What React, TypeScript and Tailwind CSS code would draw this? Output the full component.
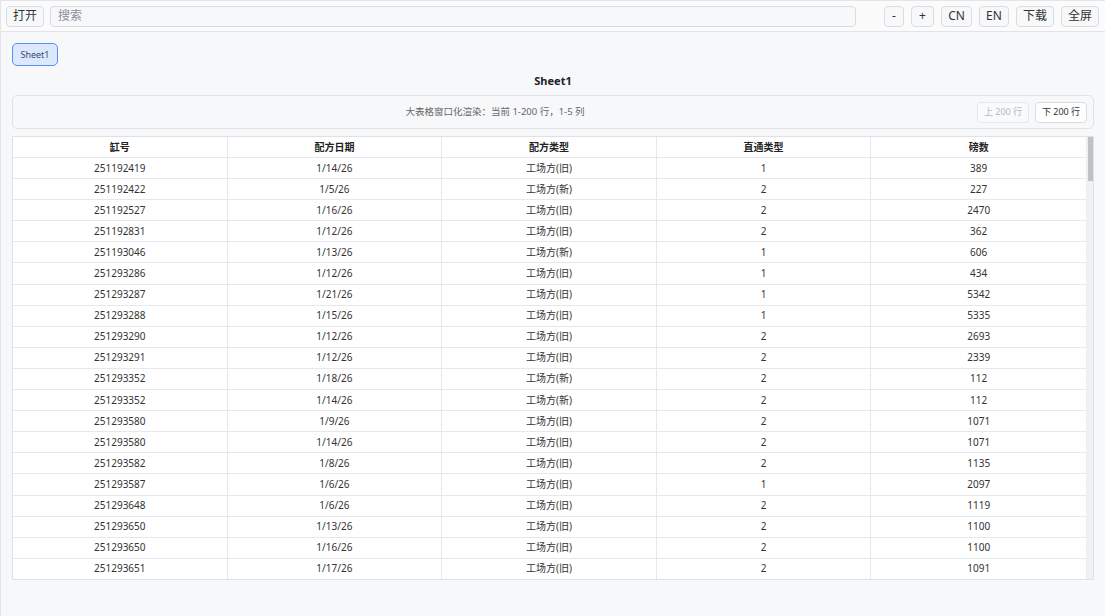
import React from 'react';

const rows: [string, string, string, string, string][] = [
  ['251192419', '1/14/26', '工场方(旧)', '1', '389'],
  ['251192422', '1/5/26', '工场方(新)', '2', '227'],
  ['251192527', '1/16/26', '工场方(旧)', '2', '2470'],
  ['251192831', '1/12/26', '工场方(旧)', '2', '362'],
  ['251193046', '1/13/26', '工场方(新)', '1', '606'],
  ['251293286', '1/12/26', '工场方(旧)', '1', '434'],
  ['251293287', '1/21/26', '工场方(旧)', '1', '5342'],
  ['251293288', '1/15/26', '工场方(旧)', '1', '5335'],
  ['251293290', '1/12/26', '工场方(旧)', '2', '2693'],
  ['251293291', '1/12/26', '工场方(旧)', '2', '2339'],
  ['251293352', '1/18/26', '工场方(新)', '2', '112'],
  ['251293352', '1/14/26', '工场方(新)', '2', '112'],
  ['251293580', '1/9/26', '工场方(旧)', '2', '1071'],
  ['251293580', '1/14/26', '工场方(旧)', '2', '1071'],
  ['251293582', '1/8/26', '工场方(旧)', '2', '1135'],
  ['251293587', '1/6/26', '工场方(旧)', '1', '2097'],
  ['251293648', '1/6/26', '工场方(旧)', '2', '1119'],
  ['251293650', '1/13/26', '工场方(旧)', '2', '1100'],
  ['251293650', '1/16/26', '工场方(旧)', '2', '1100'],
  ['251293651', '1/17/26', '工场方(旧)', '2', '1091'],
];

const headers = ['缸号', '配方日期', '配方类型', '直通类型', '磅数'];

const ToolButton = ({ children, className = '' }: { children: React.ReactNode; className?: string }) => (
  <button className={`h-[21px] rounded-[4px] border border-[#d9dce1] bg-[#f7f8fa] text-[12px] leading-none text-[#333] ${className}`}>
    {children}
  </button>
);

export default function App() {
  return (
    <div
      className="flex h-[616px] w-[1105px] flex-col overflow-hidden border-l border-t border-[#e3e5e8] bg-[#f7f8fa]"
      style={{ fontFamily: '"Noto Sans", "Noto Sans CJK SC", sans-serif' }}
    >
      <div className="flex h-[31px] shrink-0 items-center gap-[6px] border-b border-[#e1e3e7] bg-[#fbfbfc] pl-[5px] pr-[6px]">
        <ToolButton className="w-[38px]">打开</ToolButton>
        <div className="flex h-[21px] flex-1 items-center rounded-[4px] border border-[#d9dce1] bg-[#f7f8fa] px-[7px] text-[12px] text-[#8a8f98]">
          搜索
        </div>
        <div className="ml-[22px] flex items-center gap-[7px]">
          <ToolButton className="w-[20px] text-[11px]">-</ToolButton>
          <ToolButton className="w-[23px]">+</ToolButton>
          <ToolButton className="w-[31px]">CN</ToolButton>
          <ToolButton className="w-[30px]">EN</ToolButton>
          <ToolButton className="w-[38px]">下载</ToolButton>
          <ToolButton className="w-[38px]">全屏</ToolButton>
        </div>
      </div>

      <div className="flex flex-1 flex-col px-[11px] pt-[11px]">
        <div className="flex">
          <button className="h-[23px] w-[46px] rounded-[5px] border border-[#5b8ff0] bg-[#dce8fd] text-[9px] text-[#3b4a6b]">
            Sheet1
          </button>
        </div>
        <div className="mt-[6px] h-[18px] text-center text-[11px] font-bold leading-[18px] text-[#222]">Sheet1</div>
        <div className="mt-[5px] flex h-[34px] items-center rounded-[5px] border border-[#e1e3e7] bg-[#f7f8fa] pr-[6px]">
          <div className="flex-1 text-center text-[9.5px] text-[#666]">大表格窗口化渲染：当前 1-200 行，1-5 列</div>
          <div className="flex gap-[6px]">
            <button className="h-[21px] w-[52px] rounded-[4px] border border-[#e6e8eb] bg-[#f9fafb] text-[9px] text-[#b5b9bf]">上 200 行</button>
            <button className="h-[21px] w-[52px] rounded-[4px] border border-[#d9dce1] bg-white text-[9px] text-[#333]">下 200 行</button>
          </div>
        </div>

        <div className="mt-[7px] flex h-[444px] overflow-hidden border border-[#dfe1e5] bg-white">
          <div className="flex-1">
            <div className="grid grid-cols-5 text-[10px] text-[#333]">
              {headers.map((h, i) => (
                <div
                  key={h}
                  className={`flex h-[21px] items-center justify-center border-b border-[#e6e8eb] font-bold text-[#222] ${i < 4 ? 'border-r' : ''}`}
                >
                  {h}
                </div>
              ))}
              {rows.map((r, ri) =>
                r.map((c, ci) => (
                  <div
                    key={`${ri}-${ci}`}
                    className={`flex h-[21.1px] items-center justify-center border-b border-[#e6e8eb] ${ci < 4 ? 'border-r' : ''}`}
                  >
                    {c}
                  </div>
                ))
              )}
            </div>
          </div>
          <div className="w-[7px] shrink-0 border-l border-[#ececec] bg-[#f1f1f1]">
            <div className="mx-auto h-[44px] w-[5px] bg-[#c1c1c1]" />
          </div>
        </div>
      </div>
    </div>
  );
}
